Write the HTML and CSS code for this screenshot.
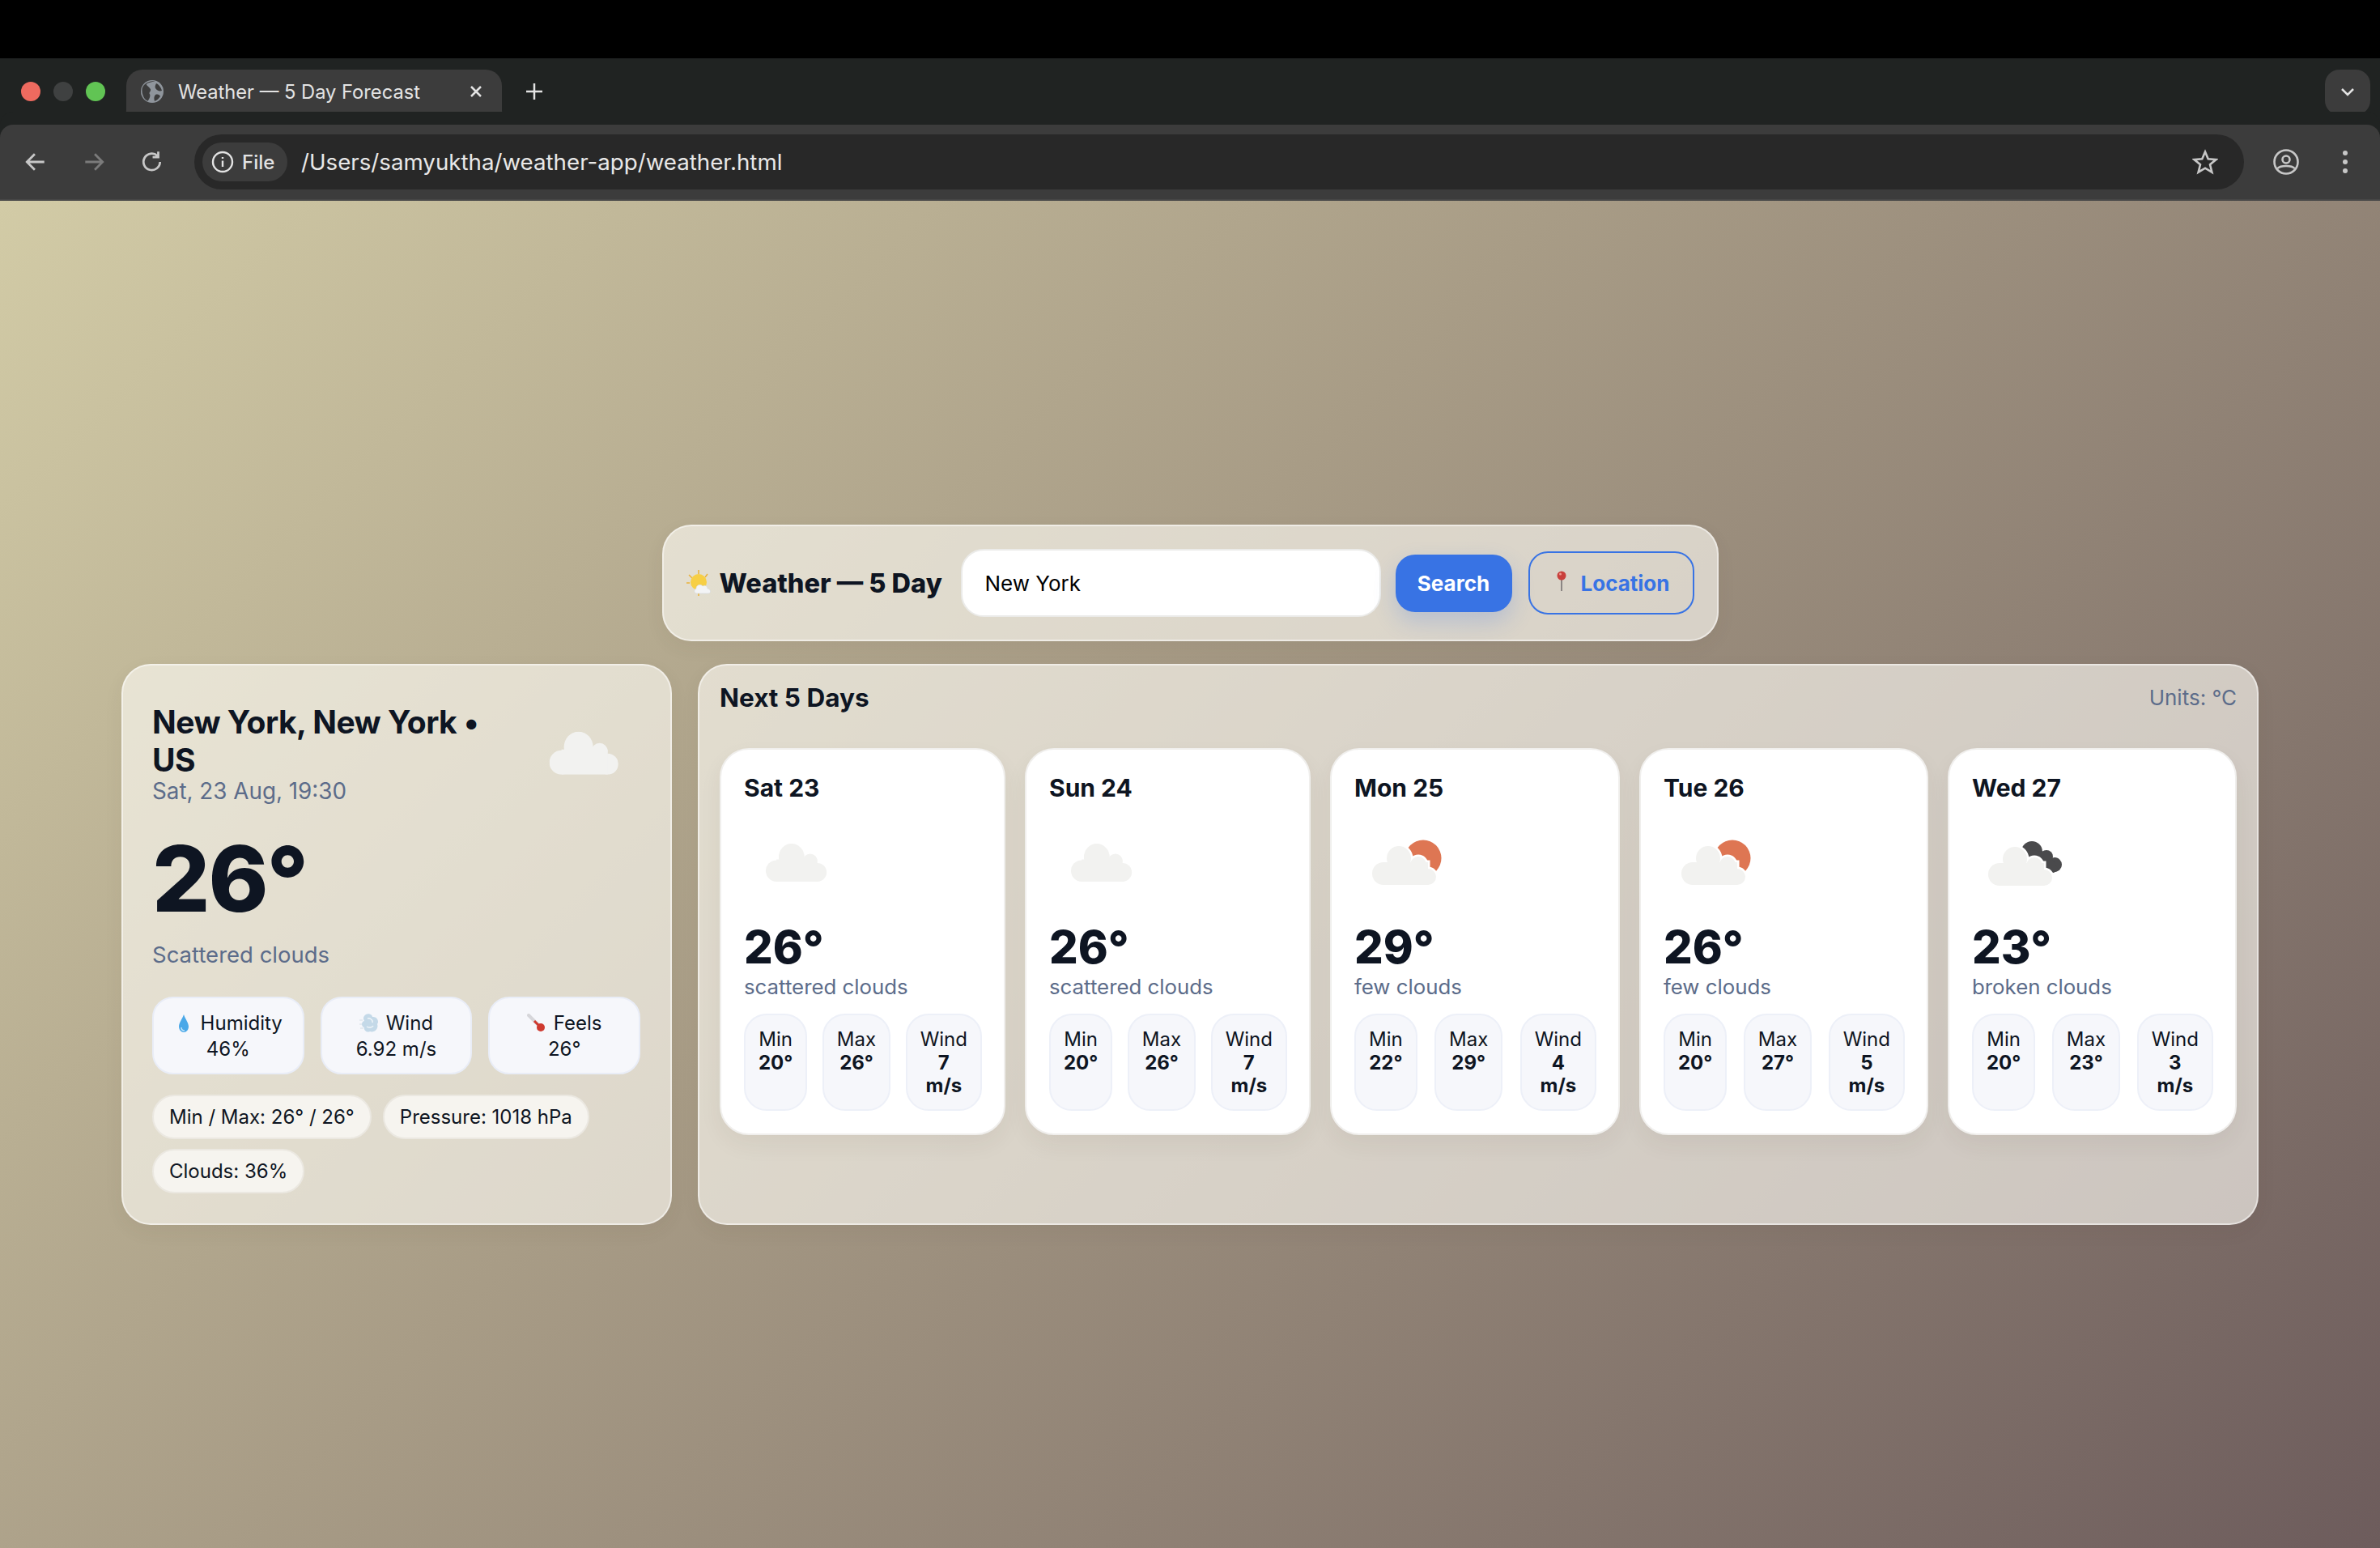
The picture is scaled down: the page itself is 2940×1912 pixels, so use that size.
FILE: index.html
```html
<!DOCTYPE html>
<html lang="en">
<head>
  <meta charset="UTF-8">
  <title>Weather — 5 Day Forecast</title>
  <link rel="stylesheet" href="styles.css">
</head>
<body>
<svg class="defs" width="0" height="0">
  <symbol id="puffs-a" viewBox="0 0 86 53">
    <ellipse cx="36" cy="19" rx="18" ry="19"/>
    <circle cx="62" cy="24" r="10"/>
    <circle cx="72" cy="40" r="13"/>
    <circle cx="15" cy="38" r="15"/>
    <rect x="15" y="22" width="57" height="31"/>
  </symbol>
  <symbol id="puffs-b" viewBox="-4 -4 85 56" overflow="visible">
    <circle cx="31" cy="15" r="15"/>
    <circle cx="55" cy="23" r="10"/>
    <circle cx="67" cy="38" r="10"/>
    <circle cx="12" cy="34" r="14"/>
    <rect x="12" y="20" width="55" height="28"/>
  </symbol>
  <symbol id="sky-scattered" viewBox="0 0 120 120">
    <use href="#puffs-a" class="puff" x="27" y="42" width="76" height="47"/>
  </symbol>
  <symbol id="sky-few" viewBox="0 0 120 120">
    <circle class="sun" cx="85" cy="60" r="22.500"/>
    <use href="#puffs-b" class="halo" x="20" y="41" width="85" height="56"/>
    <use href="#puffs-b" class="puff" x="20" y="41" width="85" height="56"/>
  </symbol>
  <symbol id="sky-broken" viewBox="0 0 120 120">
    <g class="dark">
      <circle cx="74" cy="52" r="13"/>
      <circle cx="92" cy="58" r="8"/>
      <circle cx="102" cy="68" r="9"/>
      <path d="M67 50 L93 52 L107 74 L101 78 L79 76Z"/>
    </g>
    <use href="#puffs-b" class="halo" x="18" y="42" width="85" height="56"/>
    <use href="#puffs-b" class="puff" x="18" y="42" width="85" height="56"/>
  </symbol>
</svg>

<header class="tabbar">
  <div class="lights">
    <span class="light red"></span>
    <span class="light grey"></span>
    <span class="light green"></span>
  </div>
  <div class="tab">
    <svg class="favicon" viewBox="0 0 28 28">
      <circle cx="14" cy="14" r="14" fill="#8f959c"/>
      <path d="M13 1 C9 3 6 5 4 8 C6 10 9 10 11 12 C13 14 10 16 12 18 C14 19 14 23 13 27 C8 27 2 21 1 14 C1 8 6 2 13 1Z" fill="#3c3c3c" transform="rotate(20 14 14)"/>
      <path d="M19 4 C22 5 25 9 26 13 C23 14 20 13 18 10 C17 8 18 6 19 4Z M18 18 C21 17 23 18 24 20 C22 23 20 25 17 26 C16 23 16 20 18 18Z" fill="#3c3c3c"/>
    </svg>
    <span class="tab-title">Weather — 5 Day Forecast</span>
    <svg class="tab-close" viewBox="0 0 16 16"><path d="M2 2 L14 14 M14 2 L2 14"/></svg>
  </div>
  <svg class="new-tab" viewBox="0 0 22 22"><path d="M11 1 V21 M1 11 H21"/></svg>
  <div class="tab-menu">
    <svg viewBox="0 0 18 12"><path d="M2 2 L9 9 L16 2"/></svg>
  </div>
</header>

<nav class="toolbar">
  <svg class="tool" viewBox="0 0 28 28"><path d="M24 14 H5 M13 5 L4 14 L13 23"/></svg>
  <svg class="tool off" viewBox="0 0 28 28"><path d="M4 14 H23 M15 5 L24 14 L15 23"/></svg>
  <svg class="tool" viewBox="0 0 28 28"><path d="M23 14 A9.500 9.500 0 1 1 20 7 M21 2 V8.500 H14.500"/></svg>
  <div class="address">
    <div class="chip">
      <svg viewBox="0 0 28 28"><circle cx="14" cy="14" r="12"/><path d="M14 12.500 V20 M14 8 V10"/></svg>
      <span>File</span>
    </div>
    <span class="url">/Users/samyuktha/weather-app/weather.html</span>
    <svg class="star" viewBox="0 0 32 32"><path d="M16 3.500 L19.700 12.300 L29.500 13.100 L22 19.300 L24.400 28.700 L16 23.700 L7.600 28.700 L10 19.300 L2.500 13.100 L12.300 12.300Z"/></svg>
  </div>
  <svg class="avatar" viewBox="0 0 32 32">
    <circle cx="16" cy="16" r="14.500"/>
    <circle cx="16" cy="13" r="4.500"/>
    <path d="M5.500 24 C9 20 23 20 26.500 24"/>
  </svg>
  <div class="dots"><i></i><i></i><i></i></div>
</nav>

<main class="page">
  <section class="search-bar">
    <h1 class="brand">
      <svg class="brand-icon" viewBox="0 0 34 32">
        <g stroke="#eab23a" stroke-width="1.500">
          <path d="M15 0 V5 M15 26 V32 M3 6 L7 10 M26 5 L23 9 M0 16 H4"/>
        </g>
        <circle cx="15" cy="15" r="10" fill="#f7cf45"/>
        <path d="M13 29 C9 29 9 24 12 23 C12 18 18 17 20 20 C23 18 26 20 26 23 C30 23 31 29 27 29Z" fill="#f3f4f6" stroke="#d5d8dd" stroke-width=".6"/>
      </svg>
      Weather — 5 Day
    </h1>
    <input class="city" type="text" value="New York">
    <button class="btn primary">Search</button>
    <button class="btn outline">
      <svg class="pin" viewBox="0 0 12 26">
        <path d="M6 10 V25" stroke="#8b8583" stroke-width="2"/>
        <circle cx="6" cy="6" r="5.500" fill="#c9403c"/>
        <circle cx="4.500" cy="4" r="1.500" fill="#ee9a90"/>
      </svg>
      Location
    </button>
  </section>

  <div class="columns">
    <section class="panel today">
      <div class="today-head">
        <div class="today-place">
          <h2>New York, New York • US</h2>
          <p class="muted">Sat, 23 Aug, 19:30</p>
        </div>
        <svg class="today-icon"><use href="#sky-scattered"/></svg>
      </div>
      <div class="today-temp">26°</div>
      <p class="muted today-desc">Scattered clouds</p>

      <div class="stats">
        <div class="stat">
          <svg class="mini" viewBox="0 0 24 24"><path d="M12 1 C14 7 18 11 18 16 A6 7 0 0 1 6 16 C6 11 10 7 12 1Z" fill="#4aa8e8"/><path d="M9 17 C9 20 11 21 13 21" stroke="#bfe3fa" stroke-width="1.500" fill="none"/></svg>
          Humidity<br>46%
        </div>
        <div class="stat">
          <svg class="mini" viewBox="0 0 24 24"><path d="M8 1 C11 -1 16 1 16 4 C21 3 25 9 22 13 C24 18 19 24 13 22 C9 24 5 20 6 17 C2 16 2 10 6 9 C4 6 5 3 8 1Z" fill="#c4d9e8"/><path d="M10 6 C13 5 17 8 16 11 M9 16 C12 18 16 17 17 15" stroke="#eef4f8" stroke-width="1.500" fill="none"/><path d="M0 8 H4 M0 13 H3 M1 18 H5" stroke="#dfe7ee" stroke-width="1.500"/></svg>
          Wind<br>6.92 m/s
        </div>
        <div class="stat">
          <svg class="mini" viewBox="0 0 24 24"><path d="M2 2 L15 15" stroke="#d6d6da" stroke-width="4" stroke-linecap="round"/><path d="M9 9 L15 15" stroke="#cf3a30" stroke-width="3"/><circle cx="17" cy="17" r="5" fill="#cf3a30"/></svg>
          Feels<br>26°
        </div>
      </div>

      <div class="pills">
        <span class="pill">Min / Max: 26° / 26°</span>
        <span class="pill">Pressure: 1018 hPa</span>
        <span class="pill">Clouds: 36%</span>
      </div>
    </section>

    <section class="panel forecast">
      <div class="forecast-head">
        <h2>Next 5 Days</h2>
        <span class="muted">Units: °C</span>
      </div>
      <div class="days">
        <article class="day">
          <h3>Sat 23</h3>
          <svg class="day-icon"><use href="#sky-scattered"/></svg>
          <div class="day-temp">26°</div>
          <p class="muted">scattered clouds</p>
          <div class="facts">
            <div class="fact">Min <b>20°</b></div>
            <div class="fact">Max <b>26°</b></div>
            <div class="fact">Wind <b>7 m/s</b></div>
          </div>
        </article>
        <article class="day">
          <h3>Sun 24</h3>
          <svg class="day-icon"><use href="#sky-scattered"/></svg>
          <div class="day-temp">26°</div>
          <p class="muted">scattered clouds</p>
          <div class="facts">
            <div class="fact">Min <b>20°</b></div>
            <div class="fact">Max <b>26°</b></div>
            <div class="fact">Wind <b>7 m/s</b></div>
          </div>
        </article>
        <article class="day">
          <h3>Mon 25</h3>
          <svg class="day-icon"><use href="#sky-few"/></svg>
          <div class="day-temp">29°</div>
          <p class="muted">few clouds</p>
          <div class="facts">
            <div class="fact">Min <b>22°</b></div>
            <div class="fact">Max <b>29°</b></div>
            <div class="fact">Wind <b>4 m/s</b></div>
          </div>
        </article>
        <article class="day">
          <h3>Tue 26</h3>
          <svg class="day-icon"><use href="#sky-few"/></svg>
          <div class="day-temp">26°</div>
          <p class="muted">few clouds</p>
          <div class="facts">
            <div class="fact">Min <b>20°</b></div>
            <div class="fact">Max <b>27°</b></div>
            <div class="fact">Wind <b>5 m/s</b></div>
          </div>
        </article>
        <article class="day">
          <h3>Wed 27</h3>
          <svg class="day-icon"><use href="#sky-broken"/></svg>
          <div class="day-temp">23°</div>
          <p class="muted">broken clouds</p>
          <div class="facts">
            <div class="fact">Min <b>20°</b></div>
            <div class="fact">Max <b>23°</b></div>
            <div class="fact">Wind <b>3 m/s</b></div>
          </div>
        </article>
      </div>
    </section>
  </div>
</main>
</body>
</html>
```

FILE: styles.css
```css
* {
  box-sizing: border-box;
  font-family: Inter, "Liberation Sans", sans-serif;
}
html, body {
  height: 100%;
}
body {
  margin: 0;
  display: flex;
  flex-direction: column;
  background: #000;
  color: #0e1522;
  padding-top: 72px;
}
h1, h2, h3, p {
  margin: 0;
}
.defs {
  position: absolute;
}

/* browser chrome */
.tabbar {
  height: 82px;
  background: #202322;
  display: flex;
  align-items: flex-end;
  padding-left: 26px;
  flex-shrink: 0;
}
.lights {
  display: flex;
  gap: 16px;
  align-self: flex-start;
  margin-top: 29px;
}
.light {
  width: 24px;
  height: 24px;
  border-radius: 50%;
}
.red { background: #ee6a5f; }
.grey { background: #3f4141; }
.green { background: #61c454; }
.tab {
  position: relative;
  width: 464px;
  height: 68px;
  margin-left: 26px;
  background: #3c3c3c;
  border-radius: 20px 20px 0 0;
  display: flex;
  align-items: center;
  padding: 0 0 14px 18px;
  color: #e3e3e3;
  font-size: 23.700px;
}
.tab::before, .tab::after {
  content: "";
  position: absolute;
  bottom: 0;
  width: 18px;
  height: 18px;
}
.tab::before {
  left: -18px;
  background: radial-gradient(circle at 0 0, #202322 17.500px, #3c3c3c 18px);
}
.tab::after {
  right: -18px;
  background: radial-gradient(circle at 100% 0, #202322 17.500px, #3c3c3c 18px);
}
.favicon {
  width: 28px;
  height: 28px;
}
.tab-title {
  margin-left: 18px;
  white-space: nowrap;
}
.tab-close {
  position: absolute;
  right: 24px;
  top: 19px;
  width: 16px;
  height: 16px;
}
.tab-close path, .new-tab path, .tab-menu path {
  fill: none;
  stroke: #e3e3e3;
  stroke-width: 2.500px;
}
.new-tab {
  width: 22px;
  height: 22px;
  margin: 0 0 30px 29px;
  align-self: flex-end;
}
.tab-menu {
  width: 56px;
  height: 56px;
  margin: 0 12px 12px auto;
  background: #3c3c3c;
  border-radius: 18px;
  display: flex;
  align-items: center;
  justify-content: center;
}
.tab-menu svg {
  width: 18px;
  height: 12px;
}
.toolbar {
  height: 94px;
  flex-shrink: 0;
  background: #3c3c3c;
  border-bottom: 2px solid #474747;
  display: flex;
  align-items: center;
  padding-left: 29px;
  position: relative;
  box-shadow: 0 -16px 0 0 #202322;
  border-radius: 16px 16px 0 0;
}
.tool {
  width: 30px;
  height: 30px;
  margin-right: 42px;
}
.tool path {
  fill: none;
  stroke: #c7c7c7;
  stroke-width: 2.600px;
}
.tool.off path {
  stroke: #7b7b7b;
}
.address {
  width: 2532px;
  height: 68px;
  margin-left: -5px;
  border-radius: 34px;
  background: #282828;
  display: flex;
  align-items: center;
  padding: 0 32px 0 10px;
}
.chip {
  width: 105px;
  height: 48px;
  border-radius: 24px;
  background: #3c3c3c;
  display: flex;
  align-items: center;
  padding-left: 11px;
  gap: 10px;
  color: #e3e3e3;
  font-size: 24px;
  font-weight: 500;
}
.chip svg {
  width: 28px;
  height: 28px;
}
.chip circle, .chip path {
  fill: none;
  stroke: #e3e3e3;
  stroke-width: 2.400px;
}
.url {
  margin-left: 17px;
  color: #e8e8e8;
  font-size: 27.700px;
  flex: 1;
}
.star {
  width: 32px;
  height: 32px;
}
.star path {
  fill: none;
  stroke: #c7c7c7;
  stroke-width: 2.600px;
}
.avatar {
  width: 32px;
  height: 32px;
  margin-left: 36px;
}
.avatar circle, .avatar path {
  fill: none;
  stroke: #c7c7c7;
  stroke-width: 2.600px;
}
.dots {
  margin-left: 54px;
  display: flex;
  flex-direction: column;
  gap: 5px;
}
.dots i {
  width: 6px;
  height: 6px;
  border-radius: 50%;
  background: #c7c7c7;
}

/* page */
.page {
  flex: 1;
  background: linear-gradient(135deg, #d2cba6 0%, #a89c86 42%, #6d5c5c 100%);
  display: flex;
  flex-direction: column;
  align-items: center;
  padding-top: 400px;
}
.search-bar {
  width: 1305px;
  height: 144px;
  display: flex;
  align-items: center;
  gap: 20px;
  padding: 0 28px;
  border: 2px solid rgba(255,255,255,.5);
  border-radius: 36px;
  background: rgba(255,253,247,.62);
  box-shadow: 0 8px 24px rgba(60,50,40,.06);
}
.brand {
  display: flex;
  align-items: center;
  gap: 7px;
  width: 319px;
  font-size: 32.500px;
  font-weight: 800;
  white-space: nowrap;
}
.brand-icon {
  width: 34px;
  height: 32px;
  flex-shrink: 0;
}
.city {
  width: 519px;
  height: 84px;
  padding: 0 28px;
  border: 2px solid #ebebe9;
  border-radius: 28px;
  background: #fff;
  color: #000;
  font-size: 26px;
  outline: none;
}
.btn {
  font-size: 26px;
  font-weight: 700;
  border-radius: 24px;
  cursor: pointer;
}
.primary {
  width: 144px;
  height: 71px;
  margin-left: -2px;
  border: 0;
  background: #3873e4;
  color: #fff;
  box-shadow: 0 12px 28px rgba(56,115,228,.22);
}
.outline {
  width: 205px;
  height: 78px;
  padding: 0 0 0 33px;
  border: 2px solid #3873e4;
  background: transparent;
  color: #3873e4;
  display: flex;
  align-items: center;
  gap: 18px;
}
.pin {
  width: 12px;
  height: 26px;
  margin-top: -4px;
}
.columns {
  width: 2640px;
  margin-top: 28px;
  display: grid;
  grid-template-columns: 680px 1fr;
  gap: 32px;
}
.panel {
  border: 2px solid rgba(255,255,255,.5);
  border-radius: 36px;
  background: rgba(255,253,247,.62);
  box-shadow: 0 8px 24px rgba(60,50,40,.06);
}
.muted {
  color: #5c6c8a;
}

/* today */
.today {
  padding: 36px 37px 37px 36px;
}
.today-head {
  display: flex;
  gap: 14px;
}
.today-place {
  flex: 1;
  padding-top: 10px;
}
.today-place h2 {
  font-size: 39px;
  line-height: 47px;
  font-weight: 700;
  letter-spacing: -.5px;
}
.today-place p {
  font-size: 27.800px;
  line-height: 31px;
}
.today-icon {
  width: 136px;
  height: 136px;
  margin: -2px 7px 0 0;
  flex-shrink: 0;
}
.today-temp {
  margin-top: 36px;
  font-size: 112px;
  line-height: 112px;
  font-weight: 800;
  letter-spacing: -2px;
}
.today-desc {
  margin-top: 20px;
  font-size: 27.500px;
  line-height: 36px;
}
.stats {
  margin-top: 34px;
  display: grid;
  grid-template-columns: repeat(3, 1fr);
  gap: 20px;
}
.stat {
  height: 96px;
  padding: 15px 0 0;
  text-align: center;
  font-size: 24px;
  line-height: 32px;
  background: #f6f7fb;
  border: 2px solid #e9edf7;
  border-radius: 26px;
}
.mini {
  width: 24px;
  height: 24px;
  vertical-align: -4px;
  margin-right: 2px;
}
.pills {
  margin-top: 25px;
  display: flex;
  flex-wrap: wrap;
  gap: 12px 14px;
}
.pill {
  height: 55px;
  padding: 0 19px;
  display: flex;
  align-items: center;
  font-size: 24px;
  border: 2px solid #ebe8e1;
  border-radius: 28px;
  background: #f6f4ef;
}

/* forecast */
.forecast {
  padding: 19px 25px 20px;
}
.forecast-head {
  display: flex;
  justify-content: space-between;
  align-items: center;
  height: 40px;
}
.forecast-head h2 {
  font-size: 31.500px;
  font-weight: 700;
}
.forecast-head span {
  font-size: 26px;
}
.days {
  margin-top: 43px;
  display: grid;
  grid-template-columns: 353px 353px 358px 357px 357px;
  gap: 24px;
}
.day {
  height: 478px;
  padding: 27px 27px 28px 28px;
  background: #fff;
  border: 2px solid #f0efed;
  border-radius: 36px;
  box-shadow: 0 12px 28px rgba(60,50,40,.06);
}
.day h3 {
  font-size: 30px;
  line-height: 40px;
  font-weight: 700;
}
.day-icon {
  display: block;
  width: 120px;
  height: 120px;
  margin: 7px 0 18px;
}
.day-temp {
  font-size: 56px;
  line-height: 64px;
  font-weight: 800;
}
.day p {
  font-size: 25.800px;
  line-height: 33px;
}
.facts {
  margin-top: 17px;
  display: flex;
  justify-content: space-between;
}
.fact {
  width: min-content;
  height: 120px;
  padding: 16px;
  text-align: center;
  font-size: 24px;
  line-height: 28.500px;
  background: #f6f7fb;
  border: 2px solid #edf0f8;
  border-radius: 28px;
}
.fact b {
  display: block;
  font-weight: 700;
}

/* weather icons */
.puff { fill: #f2f2f0; }
.halo { fill: #fff; stroke: #fff; stroke-width: 5px; }
.sun { fill: #de7653; }
.dark { fill: #4a4a4c; }
```
